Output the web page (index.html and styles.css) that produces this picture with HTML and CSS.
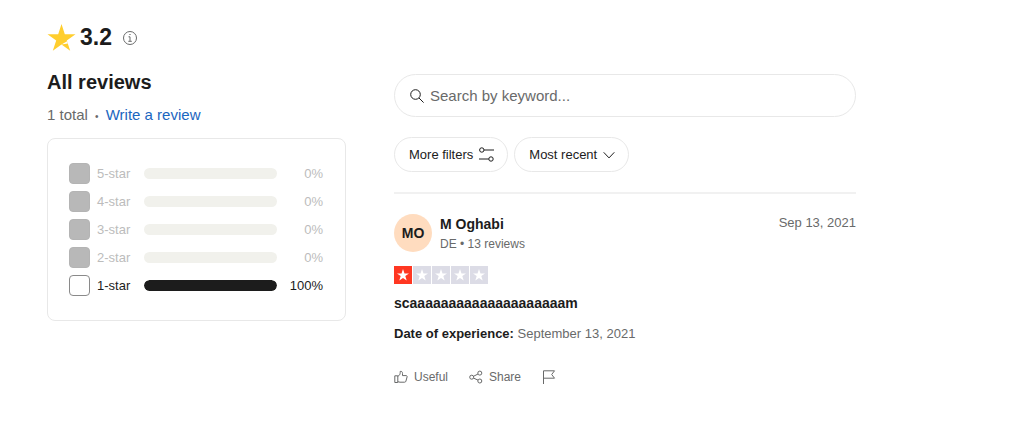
FILE: index.html
```html
<!DOCTYPE html>
<html lang="en">
<head>
    <meta charset="UTF-8">
    <meta name="viewport" content="width=device-width, initial-scale=1.0">
    <title>Reviews</title>
    <link rel="stylesheet" href="styles.css">
</head>
<body>
    <main class="page">
        <!-- Rating summary -->
        <section class="summary">
            <div class="score">
                <svg class="score-star" viewBox="0 0 28 28" aria-hidden="true">
                    <path fill="#ffce2e" d="M14 0l3.3 10.2H28l-8.7 6.3 3.4 10.3-8.7-6.4-8.7 6.4 3.4-10.3L0 10.2h10.7z"/>
                    <path fill="#fff" d="M14 20.4l5.6-3.1.7 2.1z"/>
                </svg>
                <span class="score-value">3.2</span>
                <button class="info" type="button" aria-label="About this score">
                    <svg viewBox="0 0 14 14" aria-hidden="true">
                        <circle cx="7" cy="7" r="6.5"/>
                        <path d="M5.5 5.8H7v4.4M5.3 10.3h3.5M6.4 3.5h1.2"/>
                    </svg>
                </button>
            </div>
            <h1>All reviews</h1>
            <p class="total">1 total <span class="dot">•</span> <a href="#">Write a review</a></p>

            <div class="ratings">
                <label class="rating empty">
                    <input type="checkbox" disabled>
                    <span>5-star</span>
                    <span class="bar"></span>
                    <span class="percent">0%</span>
                </label>
                <label class="rating empty">
                    <input type="checkbox" disabled>
                    <span>4-star</span>
                    <span class="bar"></span>
                    <span class="percent">0%</span>
                </label>
                <label class="rating empty">
                    <input type="checkbox" disabled>
                    <span>3-star</span>
                    <span class="bar"></span>
                    <span class="percent">0%</span>
                </label>
                <label class="rating empty">
                    <input type="checkbox" disabled>
                    <span>2-star</span>
                    <span class="bar"></span>
                    <span class="percent">0%</span>
                </label>
                <label class="rating">
                    <input type="checkbox">
                    <span>1-star</span>
                    <span class="bar"><span class="fill" style="width: 100%"></span></span>
                    <span class="percent">100%</span>
                </label>
            </div>
        </section>

        <!-- Search, filters and list -->
        <section class="reviews">
            <form class="search">
                <svg viewBox="0 0 14 14" aria-hidden="true">
                    <circle cx="5.5" cy="5.5" r="4.8"/>
                    <path d="M9 9l4.6 4.6"/>
                </svg>
                <input type="search" placeholder="Search by keyword..." aria-label="Search by keyword">
            </form>
            <div class="filters">
                <button class="pill" type="button">
                    More filters
                    <svg class="filter-icon" viewBox="0 0 15 15" aria-hidden="true">
                        <circle cx="2.8" cy="3" r="2.2"/>
                        <path d="M5 3h10M0 12h9.8"/>
                        <circle cx="12" cy="12" r="2.2"/>
                    </svg>
                </button>
                <button class="pill" type="button">
                    Most recent
                    <svg class="chevron" viewBox="0 0 12 12" aria-hidden="true">
                        <path d="M.7 3.3L6 8.9l5.3-5.6"/>
                    </svg>
                </button>
            </div>

            <article class="review">
                <header class="author">
                    <span class="avatar">MO</span>
                    <div>
                        <h2>M Oghabi</h2>
                        <p class="meta">DE • 13 reviews</p>
                    </div>
                    <time datetime="2021-09-13">Sep 13, 2021</time>
                </header>
                <div class="stars" role="img" aria-label="Rated 1 out of 5 stars">
                    <svg class="on" viewBox="0 0 18 18"><path d="M9 3l1.5 4.4H15l-3.7 2.7 1.4 4.5L9 11.9l-3.7 2.7 1.4-4.5L3 7.4h4.5z"/></svg>
                    <svg viewBox="0 0 18 18"><path d="M9 3l1.5 4.4H15l-3.7 2.7 1.4 4.5L9 11.9l-3.7 2.7 1.4-4.5L3 7.4h4.5z"/></svg>
                    <svg viewBox="0 0 18 18"><path d="M9 3l1.5 4.4H15l-3.7 2.7 1.4 4.5L9 11.9l-3.7 2.7 1.4-4.5L3 7.4h4.5z"/></svg>
                    <svg viewBox="0 0 18 18"><path d="M9 3l1.5 4.4H15l-3.7 2.7 1.4 4.5L9 11.9l-3.7 2.7 1.4-4.5L3 7.4h4.5z"/></svg>
                    <svg viewBox="0 0 18 18"><path d="M9 3l1.5 4.4H15l-3.7 2.7 1.4 4.5L9 11.9l-3.7 2.7 1.4-4.5L3 7.4h4.5z"/></svg>
                </div>
                <h3>scaaaaaaaaaaaaaaaaaaaam</h3>
                <p class="experience"><b>Date of experience:</b> September 13, 2021</p>
                <div class="actions">
                    <button type="button">
                        <svg viewBox="0 0 14 14" aria-hidden="true">
                            <path d="M.8 5.8h3v6.7h-3zM3.8 6.3c1.6-.7 2.4-2 2.4-3.8V1.4c1.6-.3 2.3.6 2.3 2v2.2h3.6c.8 0 1.2.6 1 1.3l-1.2 4.3c-.2.7-.6 1-1.3 1H6c-.9 0-1.3-.4-2.2-.6"/>
                        </svg>
                        Useful
                    </button>
                    <button type="button">
                        <svg viewBox="0 0 14 14" aria-hidden="true">
                            <circle cx="2.7" cy="7.2" r="2"/>
                            <circle cx="10.8" cy="3.1" r="2"/>
                            <circle cx="10.8" cy="11" r="2"/>
                            <path d="M4.5 6.3L9 4M4.5 8.1L9 10.1"/>
                        </svg>
                        Share
                    </button>
                    <button type="button" aria-label="Report review">
                        <svg viewBox="0 0 14 14" aria-hidden="true">
                            <path d="M1.5 14V.8h11L9.7 4.5l2.8 3.7h-11"/>
                        </svg>
                    </button>
                </div>
            </article>
        </section>
    </main>
</body>
</html>
```
FILE: styles.css
```css
body {
    margin: 0;
    background: #fff;
    color: #1c1c1c;
    font-family: "Liberation Sans", Arial, sans-serif;
    font-size: 13px;
}
h1, h2, h3, p {
    margin: 0;
}
button {
    background: none;
    border: none;
    padding: 0;
    font: inherit;
    color: inherit;
    cursor: pointer;
}
svg {
    fill: none;
    stroke: currentColor;
    flex-shrink: 0;
}
.page {
    display: flex;
    gap: 48px;
    max-width: 809px;
    padding: 24px 47px;
}

/* Rating summary */
.summary {
    flex: 0 0 299px;
}
.score {
    display: flex;
    align-items: center;
    gap: 4px;
    height: 27px;
}
.score-star {
    width: 29px;
    height: 28px;
    stroke: none;
}
.score-value {
    font-size: 23px;
    font-weight: bold;
}
.info {
    display: flex;
    margin-left: 7px;
    color: #696a6a;
}
.info svg {
    width: 14px;
    height: 14px;
}
h1 {
    margin-top: 18px;
    font-size: 20px;
    line-height: 26px;
}
.total {
    margin-top: 9px;
    font-size: 15px;
    line-height: 22px;
    color: #696a6a;
}
.dot {
    margin: 0 3px;
    font-size: 10px;
}
.total a {
    color: #1b66c0;
    text-decoration: none;
}
.ratings {
    display: flex;
    flex-direction: column;
    gap: 7px;
    margin-top: 10px;
    padding: 24px 22px 24px 21px;
    border: 1px solid #e8e8e8;
    border-radius: 8px;
}
.rating {
    display: grid;
    grid-template-columns: 21px 40px 1fr 39px;
    align-items: center;
    column-gap: 7px;
    height: 21px;
}
.rating input {
    appearance: none;
    width: 21px;
    height: 21px;
    margin: 0;
    border: 1px solid #8a8a8a;
    border-radius: 4px;
    background: #fff;
}
.rating.empty {
    color: #bcbcbc;
}
.rating.empty input {
    border-color: #b4b4b4;
    background: #b8b8b8;
}
.bar {
    height: 11px;
    border-radius: 6px;
    background: #f1f1ec;
    overflow: hidden;
}
.fill {
    display: block;
    height: 100%;
    border-radius: 6px;
    background: #1c1c1c;
}
.percent {
    text-align: right;
}

/* Search and filters */
.reviews {
    flex: 1;
    min-width: 0;
    padding-top: 50px;
}
.search {
    display: flex;
    align-items: center;
    gap: 6px;
    height: 41px;
    padding: 0 15px;
    border: 1px solid #e8e8e8;
    border-radius: 22px;
}
.search svg {
    width: 14px;
    height: 14px;
}
.search input {
    flex: 1;
    min-width: 0;
    border: none;
    outline: none;
    padding: 0;
    background: none;
    font: inherit;
    font-size: 15px;
}
.search input::placeholder {
    color: #696a6a;
}
.filters {
    display: flex;
    gap: 6px;
    margin-top: 20px;
}
.pill {
    display: flex;
    align-items: center;
    gap: 6px;
    height: 35px;
    padding: 0 13px 0 14px;
    border: 1px solid #e8e8e8;
    border-radius: 18px;
}
.filter-icon {
    width: 15px;
    height: 15px;
}
.chevron {
    width: 12px;
    height: 12px;
}

/* Review */
.review {
    margin-top: 20px;
    padding-top: 20px;
    border-top: 2px solid #f1f1f1;
}
.author {
    display: flex;
    gap: 8px;
}
.avatar {
    display: flex;
    align-items: center;
    justify-content: center;
    width: 38px;
    height: 38px;
    border-radius: 50%;
    background: #ffdcbf;
    font-size: 14px;
    font-weight: bold;
}
h2, h3 {
    font-size: 14px;
    line-height: 20px;
}
.meta {
    font-size: 12px;
    line-height: 20px;
    color: #696a6a;
}
time {
    margin-left: auto;
    line-height: 18px;
    color: #696a6a;
}
.stars {
    display: flex;
    gap: 1px;
    margin: 12px 0 9px;
}
.stars svg {
    width: 18px;
    height: 18px;
    background: #dcdce6;
    fill: #fff;
    stroke: none;
}
.stars .on {
    background: #ff3722;
}
.experience {
    margin-top: 12px;
    line-height: 18px;
    color: #696a6a;
}
.experience b {
    color: #1c1c1c;
}
.actions {
    display: flex;
    gap: 21px;
    margin-top: 25px;
    font-size: 12px;
    color: #696a6a;
}
.actions button {
    display: flex;
    align-items: center;
    gap: 6px;
    height: 18px;
}
.actions svg {
    width: 14px;
    height: 14px;
}
```
